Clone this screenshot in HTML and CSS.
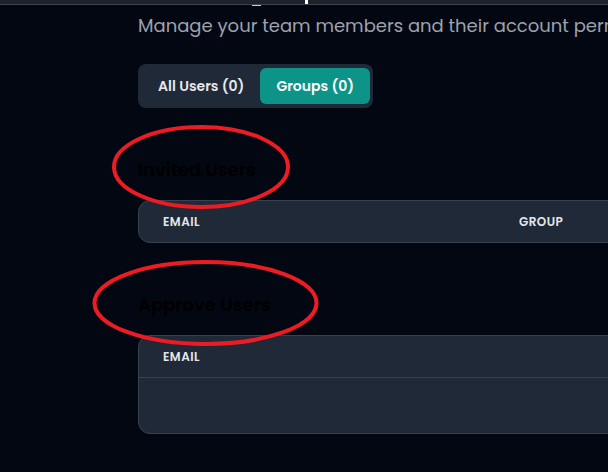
FILE: index.html
```html
<!DOCTYPE html>
<html lang="en">
<head>
<meta charset="utf-8">
<title>Team Members</title>
<link rel="stylesheet" href="styles.css">
</head>
<body>
<div class="topbar"><span class="caret"></span><span class="tick"></span></div>
<main class="page">
  <p class="subtitle">Manage your team members and their account permissions here.</p>
  <div class="tabs">
    <button class="tab">All Users (0)</button>
    <button class="tab active">Groups (0)</button>
  </div>
  <section class="section">
    <h2 class="section-title">Invited Users</h2>
    <div class="table">
      <div class="row head two">
        <div class="cell">Email</div>
        <div class="cell">Group</div>
      </div>
    </div>
  </section>
  <section class="section">
    <h2 class="section-title">Approve Users</h2>
    <div class="table">
      <div class="row head">
        <div class="cell">Email</div>
      </div>
      <div class="row body"></div>
    </div>
  </section>
</main>
<svg class="marks" width="608" height="472" viewBox="0 0 608 472" aria-hidden="true">
  <ellipse cx="201" cy="167" rx="87" ry="40" fill="none" stroke="#ed1c24" stroke-width="4"/>
  <ellipse cx="205.5" cy="303" rx="111" ry="41" fill="none" stroke="#ed1c24" stroke-width="4"/>
</svg>
</body>
</html>
```
FILE: styles.css
```css
html, body {
  margin: 0;
  padding: 0;
  background: #030712;
  overflow: hidden;
  font-family: "Poppins", "Open Sans", "Liberation Sans", sans-serif;
}
body {
  position: relative;
  width: 608px;
  height: 472px;
}
.topbar {
  position: relative;
  height: 4px;
  background: #1f2329;
  border-bottom: 1px solid #3d434a;
}
.caret {
  position: absolute;
  left: 305px;
  top: 0;
  width: 3px;
  height: 4px;
  background: #ffffff;
}
.tick {
  position: absolute;
  left: 252px;
  top: 5px;
  width: 9px;
  height: 1px;
  background: #c9ccd1;
}
.page {
  width: 960px;
  padding-left: 138px;
}
.subtitle {
  margin: 0;
  padding-top: 7px;
  font-size: 18px;
  line-height: 28px;
  color: #9ca3af;
  white-space: nowrap;
}
.tabs {
  display: inline-flex;
  gap: 0;
  margin-top: 24px;
  padding: 4px 3px 4px 4px;
  background: #1f2937;
  border-radius: 8px;
}
.tab {
  border: 0;
  background: transparent;
  font: inherit;
  font-size: 14px;
  font-weight: 600;
  line-height: 20px;
  padding: 8px 16px;
  color: #e5e7eb;
  border-radius: 6px;
}
.tab.active {
  background: #0d9488;
  color: #ffffff;
}
.section {
  margin-top: 48px;
  width: 820px;
}
.section-title {
  margin: 0 0 16px;
  font-size: 18px;
  line-height: 28px;
  font-weight: 600;
  color: #000000;
}
.table {
  background: #1f2937;
  border: 1px solid #374151;
  border-radius: 12px;
  overflow: hidden;
}
.row {
  display: grid;
  grid-template-columns: 356px 1fr;
}
.row.head {
  height: 41px;
  border-bottom: 1px solid #374151;
}
.table .row.head:last-child {
  border-bottom: 0;
}
.cell {
  padding: 12px 24px;
  font-size: 12px;
  line-height: 17px;
  font-weight: 600;
  letter-spacing: 0.04em;
  text-transform: uppercase;
  color: #e5e7eb;
}
.row.body {
  height: 55px;
}
.marks {
  position: absolute;
  left: 0;
  top: 0;
  pointer-events: none;
}
```
